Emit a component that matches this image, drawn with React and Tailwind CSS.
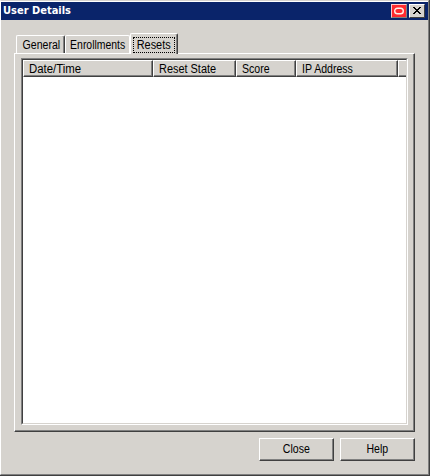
import React, { useState } from "react";

const tabs = [
  { id: "general", label: "General", width: "w-[49px]", text: "scale-x-[0.88]" },
  { id: "enrollments", label: "Enrollments", width: "w-[65px]", text: "scale-x-[0.87]" },
  { id: "resets", label: "Resets", width: "w-[48px]", text: "scale-x-[0.91]" },
];

const columns = [
  { label: "Date/Time", width: "w-[130px]", text: "scale-x-[0.95]" },
  { label: "Reset State", width: "w-[83px]", text: "scale-x-[0.91]" },
  { label: "Score", width: "w-[60px]", text: "scale-x-[0.88]" },
  { label: "IP Address", width: "w-[102px]", text: "scale-x-[0.88]" },
];

function TitleBar() {
  return (
    <div className="flex h-[18px] shrink-0 items-center bg-[#0a246a] pl-[2px] pr-[3px]">
      <span className="flex-1 whitespace-nowrap font-['DejaVu_Sans_Condensed','DejaVu_Sans',sans-serif] text-[11px] font-bold leading-[18px] text-white">
        User Details
      </span>
      <button className="mr-[2px] h-[14px] w-4 border border-b-[#808080] border-l-[#ffc8c8] border-r-[#808080] border-t-[#ffc8c8] bg-[#ff2a2e]">
        <svg className="block" width="14" height="12" viewBox="0 0 14 12" fill="none">
          <rect x="2.7" y="3.2" width="8.6" height="5.6" rx="2.8" stroke="#fff0e8" strokeWidth="1.4" />
        </svg>
      </button>
      <button className="h-[14px] w-4 border border-b-[#404040] border-l-white border-r-[#404040] border-t-white bg-[#d6d3ce]">
        <svg className="block" width="14" height="12" viewBox="0 0 14 12" shapeRendering="crispEdges">
          <path
            d="M3 2h2v1h1v1h2v-1h1v-1h2v1h-1v1h-1v1h-1v1h1v1h1v1h1v1h-2v-1h-1v-1h-2v1h-1v1h-2v-1h1v-1h1v-1h1v-1h-1v-1h-1v-1h-1z"
            fill="#000"
          />
        </svg>
      </button>
    </div>
  );
}

function Tab({ tab, active, beforeActive, onClick }) {
  return (
    <button
      onClick={onClick}
      className={`shrink-0 rounded-t-[2px] border-l border-r border-t border-l-white border-t-white bg-[#d6d3ce] ${
        beforeActive ? "border-r-white" : "border-r-[#404040] shadow-[inset_-1px_0_0_#808080]"
      } ${tab.width} ${active ? "z-10 -mb-px h-[21px] pl-[2px] pr-[2px] pt-[2px]" : "h-[18px] pl-px"}`}
    >
      <span
        className={`flex items-center justify-center whitespace-nowrap ${
          active ? "mb-px h-[16px] border border-dotted border-black leading-[14px]" : "h-[17px] leading-[18px]"
        }`}
      >
        <span className={`shrink-0 ${tab.text}`}>{tab.label}</span>
      </span>
    </button>
  );
}

function ResetsList() {
  return (
    <div className="h-[367px] w-[387px] border border-b-white border-l-[#808080] border-r-white border-t-[#808080]">
      <div className="h-full border border-b-[#d6d3ce] border-l-[#404040] border-r-[#d6d3ce] border-t-[#404040] bg-white">
        <div className="flex h-[17px] bg-[#d6d3ce]">
          {columns.map((col) => (
            <div
              key={col.label}
              className={`h-[17px] border border-b-[#404040] border-l-white border-r-[#404040] border-t-white ${col.width}`}
            >
              <div className="h-[15px] border-b border-r border-[#808080] pl-[5px] leading-[16px]">
                <span className={`block origin-left whitespace-nowrap ${col.text}`}>{col.label}</span>
              </div>
            </div>
          ))}
          <div className="h-[17px] flex-1 border-b border-l border-t border-b-[#404040] border-l-white border-t-white">
            <div className="h-[15px] border-b border-[#808080]" />
          </div>
        </div>
      </div>
    </div>
  );
}

function DialogButton({ children }) {
  return (
    <button className="h-[23px] w-[75px] border border-b-[#404040] border-l-white border-r-[#404040] border-t-white">
      <span className="flex h-full items-center justify-center border-b border-r border-[#808080] pl-px leading-none">
        <span className="scale-x-[0.88]">{children}</span>
      </span>
    </button>
  );
}

function App() {
  const [activeTab, setActiveTab] = useState("resets");
  const activeIndex = tabs.findIndex((tab) => tab.id === activeTab);

  return (
    <div className="h-[476px] w-[430px] overflow-hidden border-b border-r border-[#404040] bg-[#d6d3ce] font-['Liberation_Sans',Arial,sans-serif] text-[12px] text-black">
      <div className="flex h-full flex-col border border-b-[#808080] border-l-white border-r-[#808080] border-t-[#d6d3ce]">
        <div className="h-px shrink-0 bg-white" />
        <TitleBar />

        {/* Tabs */}
        <div className="mt-[13px] flex h-5 shrink-0 items-end pl-[15px]">
          {tabs.map((tab, i) => (
            <Tab
              key={tab.id}
              tab={tab}
              active={i === activeIndex}
              beforeActive={i === activeIndex - 1}
              onClick={() => setActiveTab(tab.id)}
            />
          ))}
        </div>

        {/* Tab page */}
        <div className="ml-[13px] h-[379px] w-[401px] shrink-0 border border-b-[#404040] border-l-white border-r-[#404040] border-t-white">
          <div className="h-full border-b border-r border-[#808080] pl-[6px] pt-[4px]">
            <ResetsList />
          </div>
        </div>

        {/* Buttons */}
        <div className="mt-[6px] flex justify-end gap-[6px] pr-[13px]">
          <DialogButton>Close</DialogButton>
          <DialogButton>Help</DialogButton>
        </div>
      </div>
    </div>
  );
}

export default App;
